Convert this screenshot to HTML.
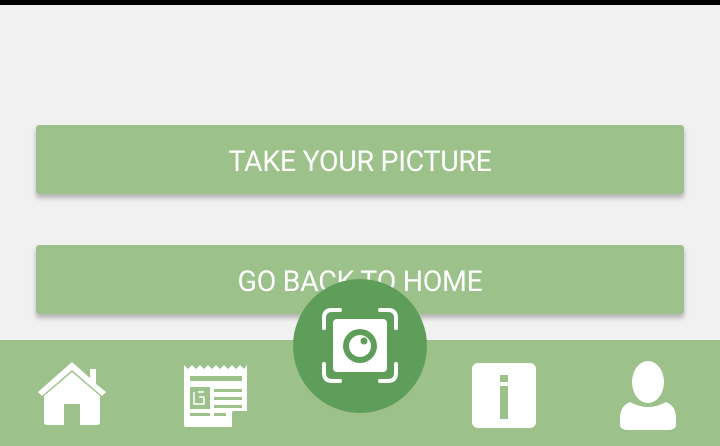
<!DOCTYPE html>
<html><head><style>
body{margin:0;width:720px;height:446px;background:#f1f1f1;position:relative;overflow:hidden;font-family:"Roboto","Liberation Sans",sans-serif}
.top{position:absolute;left:0;top:0;width:720px;height:5px;background:#000}
.btn{position:absolute;left:36px;width:648px;height:69px;background:#9dc18a;border-radius:3px;box-shadow:0 4px 5px rgba(0,0,0,.25);color:#fff;font-size:28.5px;text-align:center;line-height:73px;letter-spacing:-0.3px}
.bar{position:absolute;left:0;top:340px;width:720px;height:106px;background:#9dc18a}
</style></head><body>
<div class="top"></div>
<div class="btn" style="top:125px">TAKE YOUR PICTURE</div>
<div class="btn" style="top:245px">GO BACK TO HOME</div>
<div class="bar"></div>
<svg width="720" height="446" style="position:absolute;left:0;top:0">
<circle cx="360" cy="346" r="67" fill="#5f9e5a"/>
<g fill="none" stroke="#fff" stroke-width="4" stroke-linecap="round">
<path d="M324 328 V318 Q324 310 332 310 H340"/>
<path d="M380 310 H388 Q396 310 396 318 V328"/>
<path d="M324 364 V373 Q324 381 332 381 H340"/>
<path d="M380 381 H388 Q396 381 396 373 V364"/>
</g>
<rect x="333" y="319" width="54" height="53" rx="4" fill="#fff"/>
<circle cx="360" cy="346" r="17" fill="#5f9e5a"/>
<circle cx="360" cy="346" r="11" fill="#fff"/>
<circle cx="364" cy="341" r="3.5" fill="#5f9e5a"/>
<path d="M38 392 L72 362 L90 378 V369 H96 V384 L106 392 L102 396 L72 370 L42 396 Z" fill="#fff"/>
<path d="M44 396 L72 372 L100 396 V422 Q100 425 97 425 H80 V404 H64 V425 H47 Q44 425 44 422 Z" fill="#fff"/>
<path d="M184 365 L188 369 L192 365 L196 369 L200 365 L204 369 L208 365 L212 369 L216 365 L220 369 L224 365 L228 369 L232 365 L236 369 L240 365 L244 369 L247 365 V411 L232 427 H186 Q184 427 184 425 Z" fill="#fff"/>
<path d="M232 427 L247 411 H234 Q232 411 232 413 Z" fill="#9dc18a"/>
<g fill="#9dc18a">
<rect x="190" y="376" width="52" height="5"/>
<rect x="190" y="387" width="20" height="22"/>
<rect x="214" y="389" width="28" height="3"/>
<rect x="214" y="397" width="28" height="3"/>
<rect x="214" y="405" width="28" height="3"/>
<rect x="190" y="413" width="20" height="3"/>
<rect x="214" y="413" width="12" height="3"/>
</g>
<path d="M194 392 V404 H204 V397 H199 M198 392 H204" fill="none" stroke="#fff" stroke-width="1.5"/>
<rect x="472" y="363" width="64" height="65" rx="6" fill="#fff"/>
<rect x="500" y="375" width="8" height="7" fill="#9dc18a"/>
<rect x="500" y="386" width="8" height="33" fill="#9dc18a"/>
<ellipse cx="648" cy="382" rx="16" ry="21" fill="#fff"/>
<path d="M630 402 Q648 412 666 402 Q676 406 676 418 V424 Q676 430 668 430 H628 Q620 430 620 424 V418 Q620 406 630 402 Z" fill="#fff"/>
<path d="M632 401 Q648 410 664 401" fill="none" stroke="#9dc18a" stroke-width="1.5"/>
</svg>
</body></html>
